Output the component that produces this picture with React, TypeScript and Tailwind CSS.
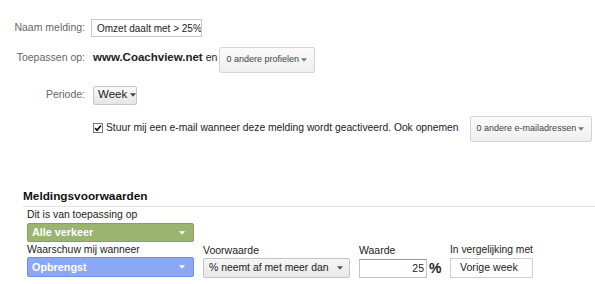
import React from "react";

const Arrow = ({ color = "#555", w = 7 }: { color?: string; w?: number }) => (
  <svg width={w} height={4} viewBox="0 0 7 4" className="shrink-0">
    <path d="M0 0h7L3.5 4z" fill={color} />
  </svg>
);

export default function App() {
  return (
    <div className="w-[595px] h-[284px] bg-white overflow-hidden relative font-['Liberation_Sans',Arial,sans-serif] text-[#222] whitespace-nowrap">
      <div className="pt-[19px]">
        {/* Naam melding */}
        <div className="flex items-center h-[18px]">
          <div className="w-[85px] shrink-0 text-right text-[10.5px] text-[#666]">Naam melding:</div>
          <div className="ml-[6px] shrink-0 w-[111px] h-[18px] border border-[#c8c8c8] flex items-center px-[5px] text-[10px] text-[#222] overflow-hidden">
            Omzet daalt met &gt; 25%
          </div>
        </div>
        {/* Toepassen op */}
        <div className="flex items-center h-[26px] mt-[10px]">
          <div className="w-[85px] shrink-0 text-right text-[10.5px] text-[#666] -mt-[4px]">Toepassen op:</div>
          <div className="ml-[8px] text-[11.5px] font-bold text-[#222] -mt-[4px]">www.Coachview.net</div>
          <div className="ml-[3px] text-[10.5px] text-[#222] -mt-[4px]">en</div>
          <div className="ml-[2px] shrink-0 w-[96px] h-[26px] border border-[#d4d4d4] rounded-[2px] bg-gradient-to-b from-[#fbfbfb] to-[#efefef] flex items-center justify-between pl-[6px] pr-[7px] text-[9px] text-[#444]">
            <span>0 andere profielen</span>
            <Arrow color="#777" w={6} />
          </div>
        </div>
        {/* Periode */}
        <div className="flex items-center h-[18px] mt-[13px]">
          <div className="w-[85px] shrink-0 text-right text-[10.5px] text-[#666]">Periode:</div>
          <div className="ml-[8px] shrink-0 w-[44px] h-[19px] border border-[#c8c8c8] rounded-[2px] bg-gradient-to-b from-[#f8f8f8] to-[#e6e6e6] flex items-center gap-[3px] px-[4px] text-[11.5px] text-[#222]">
            <span>Week</span>
            <Arrow color="#444" w={6} />
          </div>
        </div>
        {/* Checkbox row */}
        <div className="flex items-center h-[26px] mt-[12px]">
          <div className="w-[93px] shrink-0" />
          <div className="shrink-0 w-[10px] h-[10px] border border-[#777] bg-white flex items-center justify-center -mt-[2px]">
            <svg width="8" height="8" viewBox="0 0 9 9">
              <path d="M1.2 4.6 L3.4 7 L7.8 1.6" stroke="#111" strokeWidth="1.9" fill="none" />
            </svg>
          </div>
          <div className="ml-[3px] text-[10.3px] text-[#222] -mt-[2px]">
            Stuur mij een e-mail wanneer deze melding wordt geactiveerd. Ook opnemen
          </div>
          <div className="ml-[11px] w-[122px] h-[26px] border border-[#d4d4d4] rounded-[2px] bg-gradient-to-b from-[#fbfbfb] to-[#efefef] flex items-center justify-between pl-[6px] pr-[7px] text-[9px] text-[#444] shrink-0">
            <span>0 andere e-mailadressen</span>
            <Arrow color="#777" w={6} />
          </div>
        </div>
      </div>

      {/* Meldingsvoorwaarden */}
      <div className="mt-[46px] ml-[23px]">
        <div className="text-[11.8px] font-bold text-[#111] leading-[16px] pb-[2px] border-b border-[#e2e2e2]">Meldingsvoorwaarden</div>
        <div className="ml-[4px]">
          <div className="text-[10.4px] leading-[14px] mt-[1px] text-[#222]">Dit is van toepassing op</div>
          <div className="w-[167px] h-[19px] mt-[1px] rounded-[2px] border border-[#87a05c] bg-[#9bb46f] flex items-center justify-between pl-[4px] pr-[8px] text-[10.8px] font-bold text-white">
            <span>Alle verkeer</span>
            <Arrow color="#fff" w={6} />
          </div>
          <div className="flex mt-[1px]">
            <div className="w-[176px] shrink-0">
              <div className="text-[10.4px] leading-[14px] text-[#222]">Waarschuw mij wanneer</div>
              <div className="w-[167px] h-[20px] mt-[0px] rounded-[2px] border border-[#6f8ee6] bg-[#8ca7f7] flex items-center justify-between pl-[4px] pr-[8px] text-[10.8px] font-bold text-white">
                <span>Opbrengst</span>
                <Arrow color="#fff" w={6} />
              </div>
            </div>
            <div className="w-[156px] shrink-0">
              <div className="text-[10.5px] leading-[14px] text-[#222]">Voorwaarde</div>
              <div className="w-[147px] h-[20px] mt-[1px] rounded-[2px] border border-[#c4c4c4] bg-gradient-to-b from-[#f6f6f6] to-[#e8e8e8] flex items-center justify-between pl-[5px] pr-[6px] text-[10.4px] text-[#222]">
                <span>% neemt af met meer dan</span>
                <Arrow color="#555" w={6} />
              </div>
            </div>
            <div className="w-[91px] shrink-0">
              <div className="text-[10.5px] leading-[14px] text-[#222]">Waarde</div>
              <div className="flex items-center mt-[1px]">
                <div className="w-[68px] h-[19px] border border-[#c4c4c4] border-t-[#9a9a9a] flex items-center justify-end pr-[2px] text-[10.5px] text-[#222]">
                  25
                </div>
                <span className="ml-[2px] text-[14px] font-bold text-[#222]">%</span>
              </div>
            </div>
            <div className="shrink-0">
              <div className="text-[10.3px] leading-[14px] text-[#222]">In vergelijking met</div>
              <div className="w-[83px] h-[20px] mt-[1px] border border-[#d0d0d0] flex items-center pl-[9px] text-[10.6px] text-[#222]">
                Vorige week
              </div>
            </div>
          </div>
        </div>
      </div>
    </div>
  );
}
